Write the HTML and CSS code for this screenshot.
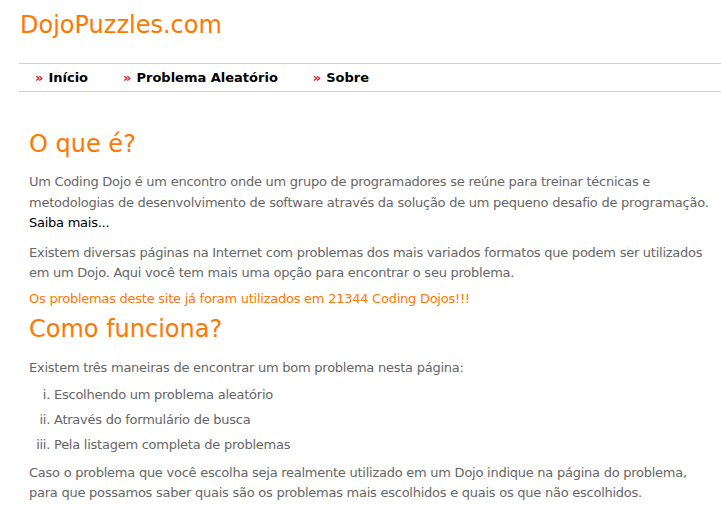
FILE: index.html
```html
<!DOCTYPE html>
<html lang="pt">
<head>
<meta charset="utf-8">
<title>DojoPuzzles.com</title>
<link rel="stylesheet" href="styles.css">
</head>
<body>
<div class="header">
  <div class="logo">DojoPuzzles.com</div>
</div>
<nav class="menu">
  <a class="menu-item" href="#"><span class="raquo">»</span>Início</a>
  <a class="menu-item" href="#"><span class="raquo">»</span>Problema Aleatório</a>
  <a class="menu-item" href="#"><span class="raquo">»</span>Sobre</a>
</nav>
<main class="content">
  <h1 class="title">O que é?</h1>
  <p class="text">Um Coding Dojo é um encontro onde um grupo de programadores se reúne para treinar técnicas e metodologias de desenvolvimento de software através da solução de um pequeno desafio de programação. <a class="more" href="#">Saiba mais...</a></p>
  <p class="text">Existem diversas páginas na Internet com problemas dos mais variados formatos que podem ser utilizados em um Dojo. Aqui você tem mais uma opção para encontrar o seu problema.</p>
  <p class="text highlight">Os problemas deste site já foram utilizados em 21344 Coding Dojos!!!</p>
  <h1 class="title title2">Como funciona?</h1>
  <p class="text">Existem três maneiras de encontrar um bom problema nesta página:</p>
  <ol class="ways">
    <li>Escolhendo um problema aleatório</li>
    <li>Através do formulário de busca</li>
    <li>Pela listagem completa de problemas</li>
  </ol>
  <p class="text">Caso o problema que você escolha seja realmente utilizado em um Dojo indique na página do problema, para que possamos saber quais são os problemas mais escolhidos e quais os que não escolhidos.</p>
</main>
</body>
</html>
```
FILE: styles.css
```css
html, body {
  margin: 0;
  padding: 0;
  background: #ffffff;
}
body {
  font-family: "DejaVu Sans", Verdana, sans-serif;
  font-size: 13px;
  color: #666666;
}
.header {
  padding: 10px 0 0 20px;
  height: 63px;
  box-sizing: border-box;
}
.logo {
  font-size: 24px;
  line-height: 30px;
  color: #ff7700;
}
.menu {
  margin-left: 19px;
  border-top: 1px solid #d4d0c8;
  border-bottom: 1px solid #d4d0c8;
  height: 27px;
  display: flex;
  align-items: center;
  padding-left: 16px;
}
.menu-item {
  font-weight: bold;
  color: #000000;
  text-decoration: none;
  font-size: 13px;
  margin-right: 35px;
}
.raquo {
  color: #e0101a;
  margin-right: 5px;
}
.content {
  padding: 0 9px 0 29px;
  letter-spacing: -0.25px;
}
.title {
  font-weight: normal;
  color: #ff7700;
  font-size: 24px;
  line-height: 32px;
  margin: 36px 0 0 0;
  letter-spacing: 0;
}
.title2 {
  margin-top: 4px;
}
.text {
  margin: 9px 0 0 0;
  line-height: 20.5px;
}
.title + .text {
  margin-top: 12px;
}
.text.highlight {
  color: #ff7700;
  margin-top: 5px;
}
.more {
  display: block;
  color: #000000;
  text-decoration: none;
}
.title2 + .text {
  margin-top: 13px;
}
.ways {
  list-style-type: lower-roman;
  margin: 3px 0 0 0;
  padding-left: 25px;
}
.ways li {
  line-height: 25px;
}
.ways + .text {
  margin-top: 6px;
}
```
